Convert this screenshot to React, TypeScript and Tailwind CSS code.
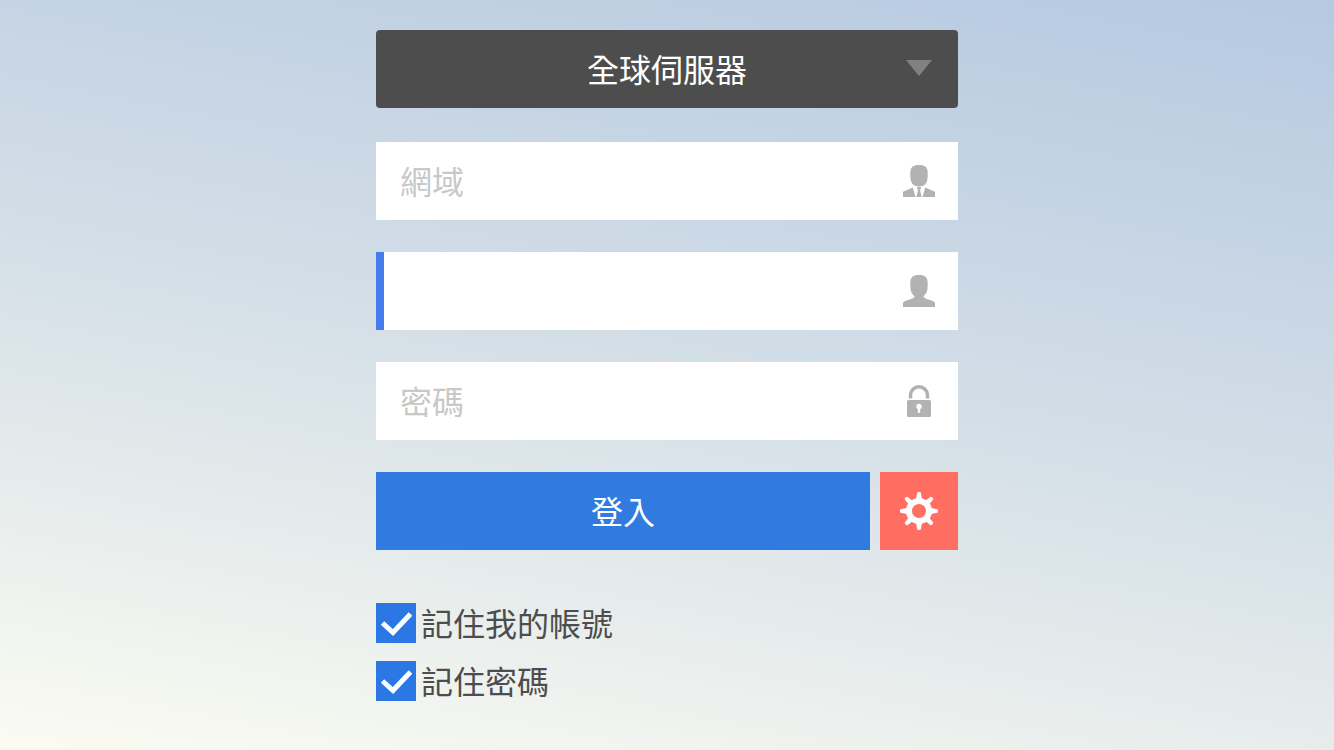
import React, { useState } from "react";

const PersonIcon = () => (
  <svg width="32" height="32" viewBox="0 0 32 32" fill="#b2b2b2">
    <path d="M16 0c6 0 8.700 2.300 8.700 8v3c0 4.800-1.300 8-4.200 10.200l.5 1.200c1.500 1 3.800 1.800 6 2.600 3.200 1.200 5 1.900 5 2.900V32H0v-4.100c0-1 1.800-1.700 5-2.900 2.200-.8 4.500-1.600 6-2.600l.5-1.200C8.600 19 7.300 15.800 7.300 11V8C7.300 2.300 10 0 16 0z" />
  </svg>
);

const SuitIcon = () => (
  <svg width="32" height="32" viewBox="0 0 32 32" fill="#b2b2b2">
    <path d="M16 0c6 0 8.700 2.300 8.700 8v3c0 6.500-2.700 10.500-8.700 10.500S7.300 17.500 7.300 11V8C7.300 2.300 10 0 16 0z" />
    <path d="M9.800 22.500L12.500 32H0v-5.200zM22.200 22.500L19.500 32H32v-5.200z" />
    <path d="M13.800 22h4.400l-1.100 3.200L18.600 32h-5.200l1.500-6.800z" />
  </svg>
);

const LockIcon = () => (
  <svg width="32" height="32" viewBox="0 0 32 32">
    <path
      d="M7.500 13.500V10a8.500 8.250 0 0 1 17 0v3.500"
      fill="none"
      stroke="#b2b2b2"
      strokeWidth="3.500"
    />
    <rect x="4" y="15" width="24" height="17" rx="1.500" fill="#b2b2b2" />
    <circle cx="16" cy="21.500" r="2.700" fill="#fff" />
    <rect x="14.800" y="22" width="2.400" height="6" rx="1" fill="#fff" />
  </svg>
);

const GearIcon = () => (
  <svg width="38" height="38" viewBox="-19 -19 38 38" fill="#fff">
    <circle r="10" fill="none" stroke="#fff" strokeWidth="6" />
    {[0, 90, 180, 270].map((angle) => (
      <path
        key={angle}
        d="M-3-12L-1.800-18.300Q-1.700-19 0-19T1.800-18.300L3-12z"
        transform={`rotate(${angle})`}
      />
    ))}
    {[45, 135, 225, 315].map((angle) => (
      <path
        key={angle}
        d="M-2.600-12L-2-17.800Q-1.800-19 0-19T2-17.800L2.600-12z"
        transform={`rotate(${angle})`}
      />
    ))}
  </svg>
);

type FieldProps = {
  label: string;
  type?: string;
  placeholder?: string;
  className?: string;
  icon: React.ReactNode;
};

const Field = ({
  label,
  type = "text",
  placeholder,
  className = "pl-6",
  icon,
}: FieldProps) => {
  const [value, setValue] = useState("");

  return (
    <label className={`flex h-[78px] items-center bg-white ${className}`}>
      <input
        className="h-full min-w-0 flex-1 bg-transparent pb-0.5 text-[#4d4d4d] outline-none placeholder:text-[#c8c8c8]"
        type={type}
        aria-label={label}
        placeholder={placeholder}
        value={value}
        onChange={(e) => setValue(e.target.value)}
      />
      <span className="flex w-[78px] shrink-0 justify-center">{icon}</span>
    </label>
  );
};

const Remember = ({ text }: { text: string }) => {
  const [checked, setChecked] = useState(true);

  return (
    <label className="flex h-10 items-center gap-[5px] text-[#4d4d4d]">
      <span className="grid size-10 shrink-0">
        <input
          className="col-start-1 row-start-1 size-10 appearance-none bg-white checked:bg-[#2b78e4]"
          type="checkbox"
          checked={checked}
          onChange={(e) => setChecked(e.target.checked)}
        />
        {checked && (
          <svg
            className="pointer-events-none col-start-1 row-start-1"
            width="40"
            height="40"
            viewBox="0 0 40 40"
          >
            <path
              d="M6.500 20L17 29.500 34.500 11"
              fill="none"
              stroke="#fff"
              strokeWidth="5"
            />
          </svg>
        )}
      </span>
      <span className="pb-0.5 leading-10">{text}</span>
    </label>
  );
};

const App = () => {
  return (
    <main className="min-h-screen bg-[linear-gradient(191deg,#b6c9e1_0%,#d4dfe7_50%,#fbfbf2_100%)] px-4 py-[30px] font-['Noto_Sans_CJK_TC',sans-serif] text-[32px]">
      <form
        className="mx-auto flex w-full max-w-[582px] flex-col"
        onSubmit={(e) => e.preventDefault()}
      >
        <div className="grid h-[78px] items-center rounded-sm bg-[#4d4d4d]">
          <select
            aria-label="伺服器"
            className="col-start-1 row-start-1 h-[78px] w-full appearance-none bg-transparent pb-0.5 text-center text-white outline-none [text-align-last:center]"
          >
            <option>全球伺服器</option>
          </select>
          <svg
            className="pointer-events-none col-start-1 row-start-1 mr-[26px] mb-0.5 justify-self-end"
            width="26"
            height="16"
            viewBox="0 0 26 16"
            fill="#818181"
          >
            <path d="M0 0h26L13 16z" />
          </svg>
        </div>
        <div className="mt-[34px] flex flex-col gap-8">
          <Field label="網域" placeholder="網域" icon={<SuitIcon />} />
          <Field
            label="帳號"
            className="border-l-8 border-[#467bee] pl-4"
            icon={<PersonIcon />}
          />
          <Field
            label="密碼"
            type="password"
            placeholder="密碼"
            icon={<LockIcon />}
          />
          <div className="flex h-[78px] gap-[10px]">
            <button
              type="submit"
              className="flex-1 bg-[#307ae0] pb-0.5 text-white"
            >
              登入
            </button>
            <button
              type="button"
              aria-label="設定"
              className="flex w-[78px] items-center justify-center bg-[#ff6e61]"
            >
              <GearIcon />
            </button>
          </div>
        </div>
        <div className="mt-[53px] flex flex-col items-start gap-[18px]">
          <Remember text="記住我的帳號" />
          <Remember text="記住密碼" />
        </div>
      </form>
    </main>
  );
};

export default App;
